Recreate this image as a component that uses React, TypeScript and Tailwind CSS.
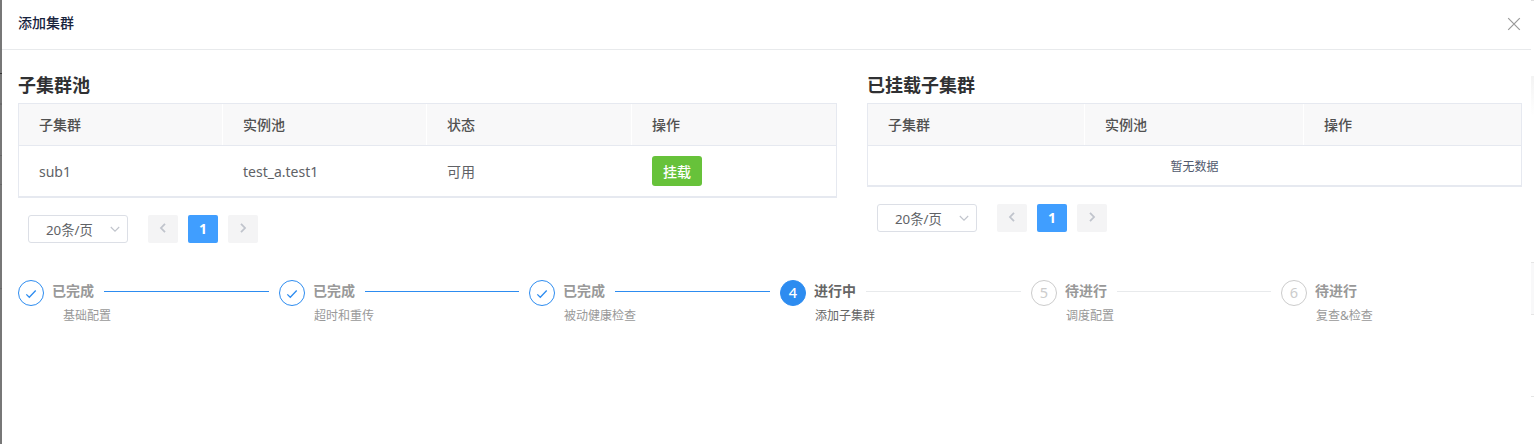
import React from "react";

type StepStatus = "finish" | "process" | "wait";

const STEPS: { status: StepStatus; title: string; content: string; width: string; indent: string }[] = [
  { status: "finish", title: "已完成", content: "基础配置", width: "w-[261px]", indent: "pl-[45px]" },
  { status: "finish", title: "已完成", content: "超时和重传", width: "w-[250px]", indent: "pl-[35px]" },
  { status: "finish", title: "已完成", content: "被动健康检查", width: "w-[251px]", indent: "pl-[35px]" },
  { status: "process", title: "进行中", content: "添加子集群", width: "w-[251px]", indent: "pl-[35px]" },
  { status: "wait", title: "待进行", content: "调度配置", width: "w-[250px]", indent: "pl-[35px]" },
  { status: "wait", title: "待进行", content: "复查&检查", width: "w-[240px]", indent: "pl-[35px]" },
];

const HEAD_STYLE: Record<StepStatus, string> = {
  finish: "border-[#2d8cf0] bg-white text-[#2d8cf0]",
  process: "border-[#2d8cf0] bg-[#2d8cf0] text-white font-medium",
  wait: "border-[#ccc] bg-white text-[#ccc]",
};

const TITLE_STYLE: Record<StepStatus, string> = {
  finish: "text-[#999]",
  process: "text-[#666]",
  wait: "text-[#999]",
};

const LINE_STYLE: Record<StepStatus, string> = {
  finish: "bg-[#2d8cf0]",
  process: "bg-[#e8eaec]",
  wait: "bg-[#e8eaec]",
};

function Chevron({ d, className }: { d: string; className: string }) {
  return (
    <svg viewBox="0 0 12 12" fill="none" stroke="currentColor" className={className}>
      <path d={d} />
    </svg>
  );
}

function Pagination() {
  return (
    <div className="flex pl-[10px] text-[13px] leading-[28px]">
      <div className="flex h-7 w-[100px] items-center rounded-[3px] border border-[#dcdfe6] pl-[17px] text-[#606266]">
        <span className="w-[62px] pt-px text-[13.3px] whitespace-nowrap">20条/页</span>
        <Chevron d="M1.8 4l4.2 4.2L10.2 4" className="mb-px ml-px h-3 w-3 stroke-[1.1] text-[#c0c4cc]" />
      </div>
      <button className="ml-5 flex h-7 w-[30px] items-center justify-center rounded-[2px] bg-[#f4f4f5] text-[#c0c4cc]">
        <Chevron d="M8 1.8L4 6l4 4.2" className="mb-[2px] h-3 w-3 stroke-[1.8]" />
      </button>
      <button className="ml-[10px] h-7 w-[30px] rounded-[2px] bg-[#409eff] text-[14px] font-bold text-white">1</button>
      <button className="ml-[10px] flex h-7 w-[30px] items-center justify-center rounded-[2px] bg-[#f4f4f5] text-[#c0c4cc]">
        <Chevron d="M4 1.8L8 6l-4 4.2" className="mb-[2px] h-3 w-3 stroke-[1.8]" />
      </button>
    </div>
  );
}

function HeaderCell({ width, last, children }: { width: string; last?: boolean; children: React.ReactNode }) {
  return (
    <div className={`${width} ${last ? "" : "border-r border-white"} h-full pl-5 leading-[42px] font-medium`}>
      {children}
    </div>
  );
}

function Step({ index }: { index: number }) {
  const step = STEPS[index];
  const last = index === STEPS.length - 1;
  return (
    <div className={`${step.width} shrink-0`}>
      <div className="flex h-[26px]">
        <div
          className={`${HEAD_STYLE[step.status]} flex h-[26px] w-[26px] items-center justify-center rounded-full border text-[14.5px] leading-[22px]`}
        >
          {step.status === "finish" ? (
            <svg viewBox="0 0 12 12" fill="none" stroke="currentColor" className="mt-[2px] h-3 w-3 stroke-[1.3]">
              <path d="M1.3 6.4l3 2.9L10.7 2.5" />
            </svg>
          ) : (
            <span className="pb-[2px]">{index + 1}</span>
          )}
        </div>
        <div className={`${TITLE_STYLE[step.status]} ml-[8px] w-[42px] text-[14px] leading-[22px] font-bold`}>
          {step.title}
        </div>
        {!last && <div className={`${LINE_STYLE[step.status]} mt-[11px] mr-[10px] ml-[10px] h-px flex-1`} />}
      </div>
      <div className={`${step.indent} ${TITLE_STYLE[step.status]} text-[12px] leading-[20px]`}>{step.content}</div>
    </div>
  );
}

export default function App() {
  return (
    <div className="flex h-[444px] w-[1534px] overflow-hidden bg-white font-['Noto_Sans','Noto_Sans_CJK_SC',sans-serif]">
      <div className="flex w-[2px] shrink-0 flex-col bg-[#777]">
        <div className="mt-[73px] h-px bg-[#333]" />
        <div className="mt-[29px] h-[2px] bg-[#6b6b6b]" />
        <div className="mt-[50px] h-px bg-[#686868]" />
        <div className="mt-[28px] h-px bg-[#686868]" />
        <div className="mt-[103px] h-px bg-[#686868]" />
      </div>
      <div className="w-[1529px] shrink-0">
        <header className="flex h-[50px] items-center justify-between border-b border-[#e8eaec] pr-[10px] pl-4">
          <h1 className="pb-[3px] text-[14px] leading-5 font-medium text-[#17233d]">添加集群</h1>
          <svg viewBox="0 0 14 14" fill="none" stroke="#999" className="mb-[2px] h-[14px] w-[14px] stroke-[1.2]">
            <path d="M1.2 1.2l11.6 11.6M12.8 1.2L1.2 12.8" />
          </svg>
        </header>
        <main className="px-4 pt-[22px]">
          <div className="flex h-[208px] items-start">
            <section className="w-[819px]">
              <h2 className="h-[31px] text-[18px] leading-[26px] font-bold text-[#303133]">子集群池</h2>
              <div className="border border-[#e6e9f0] text-[14px]">
                <div className="box-content flex h-[41px] border-b border-[#e6e9f0] bg-[#f8f8f9] text-[#515151]">
                  <HeaderCell width="w-[204px]">子集群</HeaderCell>
                  <HeaderCell width="w-[204px]">实例池</HeaderCell>
                  <HeaderCell width="w-[205px]">状态</HeaderCell>
                  <HeaderCell width="w-[204px]" last>操作</HeaderCell>
                </div>
                <div className="box-content flex h-[50px] items-center border-b border-[#e6e9f0] text-[#606266]">
                  <div className="w-[204px] pl-5">sub1</div>
                  <div className="w-[204px] pl-5">test_a.test1</div>
                  <div className="w-[205px] pl-5">可用</div>
                  <div className="w-[204px] pl-5">
                    <button className="block h-[30px] w-[50px] rounded-[3px] bg-[#67c23a] leading-[31px] font-medium text-white">
                      挂载
                    </button>
                  </div>
                </div>
              </div>
              <div className="mt-[17px]">
                <Pagination />
              </div>
            </section>
            <section className="ml-[30px] w-[655px] shrink-0">
              <h2 className="h-[31px] text-[18px] leading-[26px] font-bold text-[#303133]">已挂载子集群</h2>
              <div className="border border-[#e6e9f0] text-[14px]">
                <div className="box-content flex h-[41px] border-b border-[#e6e9f0] bg-[#f8f8f9] text-[#515151]">
                  <HeaderCell width="w-[217px]">子集群</HeaderCell>
                  <HeaderCell width="w-[219px]">实例池</HeaderCell>
                  <HeaderCell width="w-[217px]" last>操作</HeaderCell>
                </div>
                <div className="box-content h-[39px] border-b border-[#e6e9f0] text-center text-[12px] leading-[41px] text-[#515a6e]">
                  暂无数据
                </div>
              </div>
              <div className="mt-[17px]">
                <Pagination />
              </div>
            </section>
          </div>
          <div className="flex">
            {STEPS.map((_, i) => (
              <Step key={i} index={i} />
            ))}
          </div>
        </main>
      </div>
      <div className="flex w-[3px] shrink-0 flex-col bg-white">
        <div className="h-px bg-[#ddd]" />
        <div className="mt-[75px] h-10 bg-gradient-to-b from-[#f3f3f3] to-white" />
        <div className="mt-[146px] h-[53px] border-y border-[#e5e5e5] bg-[#f8f8f9]" />
        <div className="mt-[81px] h-px bg-[#e5e5e5]" />
      </div>
    </div>
  );
}
